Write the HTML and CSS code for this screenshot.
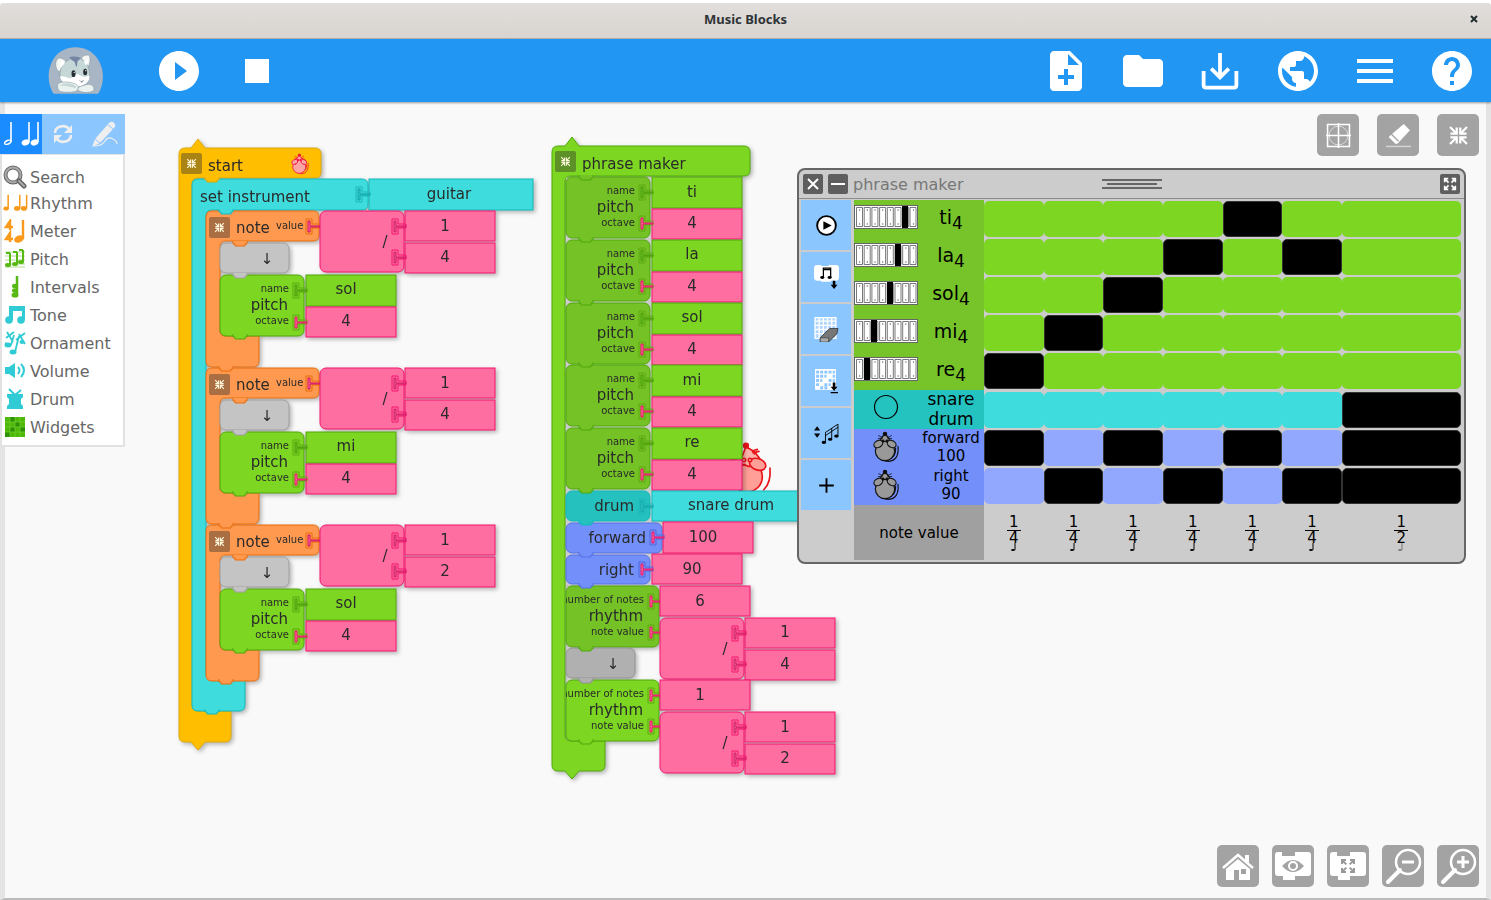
FILE: index.html
```
<!DOCTYPE html>
<html lang="en">
<head>
<meta charset="utf-8">
<title>Music Blocks</title>
<link rel="stylesheet" href="styles.css">
</head>
<body>
<svg class="defs" aria-hidden="true">
  <defs>
    <symbol id="i-collapse" viewBox="0 0 24 24"><path fill="none" stroke="currentColor" stroke-width="2.500" d="M2.500 2.500l7 7M10 3v7H3M21.500 2.500l-7 7M14 3v7h7M2.500 21.500l7-7M10 21v-7H3M21.500 21.500l-7-7M14 21v-7h7"/></symbol>
    <symbol id="i-expand" viewBox="0 0 24 24"><path fill="none" stroke="currentColor" stroke-width="3" d="M3.500 3.500l6 6M3 9V3h6M20.500 3.500l-6 6M21 9V3h-6M3.500 20.500l6-6M3 15v6h6M20.500 20.500l-6-6M21 15v6h-6"/></symbol>
    <symbol id="i-piano" viewBox="0 0 64 24">
      <rect x=".5" y=".5" width="63" height="23" fill="#fff" stroke="#666"/>
      <path fill="none" stroke="#555" stroke-width=".8" d="M2.500 2.500h6v19h-6zM10.200 2.500h6v19h-6zM17.900 2.500h6v19h-6zM25.600 2.500h6v19h-6zM33.300 2.500h6v19h-6zM41 2.500h6v19h-6zM48.700 2.500h6v19h-6zM56 2.500h6v19h-6z"/>
      <path stroke="#444" stroke-width="1.200" stroke-dasharray="1.200 6.500" d="M5 5H62M5 19H62"/>
    </symbol>
    <symbol id="i-mouse" viewBox="236 148 88 96">
      <g stroke="currentColor" stroke-width="3.500" stroke-linecap="round">
        <path fill="none" d="M316 194q4 42-28 45q-12 0-18-6M309 200q0 30-24 33"/>
        <path d="M277 158q14 10 20 34h-40q6-24 20-34z"/>
        <circle cx="277" cy="208" r="29"/>
        <ellipse cx="257" cy="187" rx="10" ry="14" transform="rotate(62 257 187)"/>
        <ellipse cx="297" cy="187" rx="10" ry="14" transform="rotate(-62 297 187)"/>
        <path fill="none" stroke-width="2.500" d="M258 162l11 6M257 171h11M296 162l-11 6M297 171h-11"/>
        <circle cx="277" cy="157" r="5" fill="currentColor"/><circle cx="271" cy="178" r="2.500" fill="currentColor"/><circle cx="283" cy="178" r="2.500" fill="currentColor"/>
      </g>
    </symbol>
    <symbol id="i-notes" viewBox="0 0 38 26">
      <g stroke="currentColor" stroke-width="1.600"><path d="M9 1v20M27 1v20M36 1v20"/></g>
      <g fill="currentColor"><path fill-rule="evenodd" d="M2 23c-1-4 6-6 7.500-3.500c1 4-6 6-7.500 3.500zm1.300-.5c1 1 5-1 5-2.500c-1-1-5 1-5 2.500z"/><ellipse cx="23.500" cy="21.500" rx="4" ry="2.900" transform="rotate(-20 23.500 21.500)"/><ellipse cx="32.500" cy="21.500" rx="4" ry="2.900" transform="rotate(-20 32.500 21.500)"/></g>
    </symbol>
    <g id="plug"><path class="socket" d="M0-7h6v5h8v4H6v6H0z"/><path class="core" d="M2-5h2v5h10v1H4v5H2z"/></g>
    <path id="tab" d="M0-2V1h2v2h10V1h2v-3"/>
    <g id="fold"><rect width="21" height="21" rx="2" fill="#333" fill-opacity=".42"/><use href="#i-collapse" x="5" y="5" width="11" height="11" color="#fff8dc"/></g>
    <g id="pitch">
      <rect width="84" height="61" rx="6"/>
      <g class="label"><text class="small end" x="69" y="17">name</text><text class="end" x="68" y="35">pitch</text><text class="small end" x="69" y="49">octave</text></g>
    </g>
    <g id="divide">
      <rect width="84" height="61" rx="6"/><rect x="85" width="90" height="30"/><rect x="85" y="32" width="90" height="30"/>
      <use href="#plug" x="72" y="15"/><use href="#plug" x="72" y="46"/>
      <text class="label mid" x="65" y="36">/</text>
    </g>
    <g id="note-arm"><path d="M6 0h101q6 0 6 6v18q0 6-6 6H20q-6 0-6 6v84q0 5 5 5h34v25q0 6-6 6H6q-6 0-6-6V6q0-6 6-6z"/></g>
    <g id="pause"><rect width="69" height="30" rx="6"/><text class="label mid" x="47" y="21">↓</text></g>
    <g id="note">
      <use href="#note-arm" class="orange" x="0" y="0"/>
      <use href="#fold" x="3" y="6"/>
      <g class="label"><text x="30" y="22">note</text><text class="small" x="70" y="18">value</text></g>
      <use href="#plug" class="p-orange" x="100" y="15"/>
      <use href="#divide" class="pink" x="114" y="0"/>
      <use href="#pause" class="gray" x="14" y="32"/><use href="#tab" class="orange" x="27" y="32"/>
      <use href="#pitch" class="green" x="14" y="64"/><use href="#tab" class="gray" x="27" y="64"/>
      <use href="#tab" class="green" x="27" y="125"/>
      <rect class="green" x="100" y="64" width="90" height="31"/><rect class="pink" x="100" y="96" width="90" height="30"/>
      <use href="#plug" class="p-green" x="87" y="79"/><use href="#plug" class="p-pink" x="87" y="111"/>
      <text class="label mid" x="140" y="115">4</text>
    </g>
    <g id="pitch-row">
      <use href="#pitch" class="green dim" x="0" y="0"/>
      <rect class="green" x="86" width="90" height="31"/><rect class="pink" x="86" y="32" width="90" height="30"/>
      <use href="#plug" class="p-green" x="73" y="15"/><use href="#plug" class="p-pink" x="73" y="46"/>
      <text class="label mid" x="126" y="51">4</text>
    </g>
    <clipPath id="rhythm-clip"><rect width="94" height="61"/></clipPath>
    <g id="rhythm">
      <rect width="93" height="61" rx="6"/>
      <g class="label" clip-path="url(#rhythm-clip)"><text class="small end" x="78" y="17">number of notes</text><text class="end" x="77" y="35">rhythm</text><text class="small end" x="78" y="49">note value</text></g>
      <g class="p-pink"><use href="#plug" x="82" y="15"/><use href="#plug" x="82" y="46"/></g>
      <g class="pink"><rect x="94" width="90" height="30"/><use href="#divide" x="94" y="32"/></g>
    </g>
    <g id="frac-note"><path stroke="currentColor" d="M5 0v7"/><ellipse cx="3" cy="7" rx="2" ry="1" fill="currentColor"/></g>
  </defs>
</svg>

<header class="titlebar"><span class="titlebar-name">Music Blocks</span><button class="titlebar-close" aria-label="Close window"><svg viewBox="0 0 8 8"><path d="M1 1l6 6M7 1L1 7" stroke="#222b2e" stroke-width="2"/></svg></button></header>

<nav class="toolbar">
  <div class="toolbar-left">
    <button class="logo" aria-label="About"><svg viewBox="140 130 176 150">
      <path fill="#a7b5c4" d="M162 273C130 225 150 135 228 134C306 135 328 225 296 273z"/>
      <g stroke="#7d8e93" stroke-width="1.500">
        <path fill="#f3f6f3" d="M179 207c-16-10-12-42 2-41c10 1 18 8 20 15z"/>
        <path fill="#f3f6f3" d="M246 166c5-10 24-12 25-3c2 18-1 26-12 35z"/>
        <path fill="#c6d7d7" d="M182 222c-4-34 20-54 46-57c24 0 40 20 43 50c0 22-20 35-42 35c-24 0-44-8-47-28z"/>
      </g>
      <path fill="#fff" d="M181 222c14-4 20 4 30 5c10 0 14-12 21-12c8 0 14 8 24 7l14-3c2 18-16 33-42 33c-20 0-42-10-47-30z"/>
      <path fill="#7485a4" d="M209 163q16-4 34 2q-4 10-9 11l-2 18q-5-8-7-17q-8-2-16-14z"/>
      <path fill="#fff" d="M181 185l9-13l6 10l-12 13zM253 178l12-8v12l-6 6z"/>
      <ellipse cx="222" cy="213" rx="6" ry="10" fill="#262d35"/><ellipse cx="257" cy="208" rx="6" ry="10" fill="#262d35"/><circle cx="224" cy="209" r="2" fill="#fff"/><circle cx="259" cy="204" r="2" fill="#fff"/>
      <path fill="none" stroke="#66777b" stroke-width="2" d="M240 233q4 6 7 3q3 3 5-4M247 236v5"/>
      <g fill="#eaf2f0" stroke="#7d8e93" stroke-width="1.500"><path d="M174 247c2-12 34-10 46-6c16 4 20 14 13 23c-12 7-48 6-55 0q-5-8-4-17z"/><path d="M235 262c-1-12 15-12 25-16c16-4 25 6 23 15c-2 10-38 12-48 1z"/></g>
      <path fill="#c6d7d7" d="M178 248q24-10 42-3q10 4 10 12q-24-8-52-9z"/>
    </svg></button>
    <button aria-label="Play"><svg viewBox="0 0 24 24"><path d="M12 2C6.480 2 2 6.480 2 12s4.480 10 10 10 10-4.480 10-10S17.520 2 12 2zm-2 14.500v-9l6 4.500-6 4.500z"/></svg></button>
    <button aria-label="Stop"><svg viewBox="0 0 24 24"><path d="M6 6h12v12H6z"/></svg></button>
  </div>
  <div class="toolbar-right">
    <button aria-label="New project"><svg viewBox="0 0 24 24"><path d="M14 2H6c-1.100 0-1.990.9-1.990 2L4 20c0 1.100.89 2 1.990 2H18c1.100 0 2-.9 2-2V8l-6-6zm2 14h-3v3h-2v-3H8v-2h3v-3h2v3h3v2zm-3-7V3.500L18.500 9H13z"/></svg></button>
    <button aria-label="Load project"><svg viewBox="0 0 24 24"><path d="M10 4H4c-1.100 0-1.990.9-1.990 2L2 18c0 1.100.9 2 2 2h16c1.100 0 2-.9 2-2V8c0-1.100-.9-2-2-2h-8l-2-2z"/></svg></button>
    <button aria-label="Save project"><svg viewBox="0 0 24 24"><path fill="none" stroke="#fff" stroke-width="1.900" d="M3.800 12v7q0 1.300 1.300 1.300h13.800q1.300 0 1.300-1.300v-7M12 3v12M7.600 10.800l4.400 4.400 4.400-4.400"/></svg></button>
    <button aria-label="Planet"><svg viewBox="0 0 24 24"><path d="M12 2C6.480 2 2 6.480 2 12s4.480 10 10 10 10-4.480 10-10S17.520 2 12 2zm-1 17.930c-3.950-.49-7-3.850-7-7.930 0-.62.08-1.210.21-1.790L9 15v1c0 1.100.9 2 2 2v1.930zm6.900-2.540c-.26-.81-1-1.390-1.900-1.390h-1v-3c0-.55-.45-1-1-1H8v-2h2c.55 0 1-.45 1-1V7h2c1.100 0 2-.9 2-2v-.41c2.930 1.190 5 4.060 5 7.410 0 2.080-.8 3.970-2.100 5.390z"/></svg></button>
    <button aria-label="Menu"><svg viewBox="0 0 24 24"><path d="M3 18h18v-2H3v2zm0-5h18v-2H3v2zm0-7v2h18V6H3z"/></svg></button>
    <button aria-label="Help"><svg viewBox="0 0 24 24"><path d="M12 2C6.480 2 2 6.480 2 12s4.480 10 10 10 10-4.480 10-10S17.520 2 12 2zm1 17h-2v-2h2v2zm2.070-7.750l-.9.920C13.450 12.900 13 13.500 13 15h-2v-.5c0-1.100.45-2.100 1.170-2.830l1.240-1.260c.37-.36.590-.86.590-1.410 0-1.100-.9-2-2-2s-2 .9-2 2H8c0-2.210 1.790-4 4-4s4 1.790 4 4c0 .88-.36 1.680-.93 2.250z"/></svg></button>
  </div>
</nav>

<main class="workspace">
  <svg class="blocks" width="850" height="700" viewBox="0 102 850 700">
    <!-- turtle on the stage, partly behind the blocks -->
    <g transform="translate(545 350) scale(.3333)" stroke="#e8141c" stroke-width="5" stroke-linecap="round">
      <path fill="none" d="M675 354q4 44-19 66"/>
      <circle cx="606" cy="380" r="46" fill="#ff9f97"/>
      <path fill="#ffb3ab" d="M603 290q40 20 44 46l-34 14-30-10z"/>
      <ellipse cx="638" cy="343" rx="25" ry="17" fill="#ff9f97" transform="rotate(20 638 343)"/>
      <path fill="none" d="M622 303l15-5M624 308l18-4M628 312l8-8M555 327h20M592 346l8-3"/>
      <circle cx="603" cy="287" r="7" fill="#e8141c"/><circle cx="597" cy="330" r="5" fill="#fff"/><circle cx="615" cy="330" r="5" fill="#fff"/>
    </g>

    <g class="stack">
      <path class="yellow" d="M185 148h6l7-9 7 9h110q6 0 6 6v18q0 6-6 6H198q-6 0-6 6v521q0 6 6 6h33v25q0 6-6 6h-20l-7 8-7-8h-6q-6 0-6-6V154q0-6 6-6z"/>
      <use href="#fold" x="181" y="153"/><text class="label" x="208" y="171">start</text>
      <use href="#i-mouse" class="pink-mouse" x="290" y="153" width="20" height="22"/>
      <path class="cyan" d="M198 179h164q6 0 6 6v19q0 6-6 6H212q-6 0-6 6v458q0 6 6 6h33v25q0 6-6 6h-41q-6 0-6-6V185q0-6 6-6z"/>
      <use href="#tab" class="yellow" x="205" y="179"/>
      <text class="label" x="200" y="202">set instrument</text>
      <rect class="cyan" x="369" y="179" width="164" height="31"/><use href="#plug" class="p-cyan" x="356" y="194"/>
      <text class="label mid" x="449" y="199">guitar</text>

      <use href="#note" x="206" y="211"/><use href="#tab" class="cyan" x="219" y="211"/>
      <use href="#note" x="206" y="368"/><use href="#tab" class="orange" x="219" y="368"/>
      <use href="#note" x="206" y="525"/><use href="#tab" class="orange" x="219" y="525"/>
      <use href="#tab" class="orange" x="219" y="681"/><use href="#tab" class="cyan" x="205" y="711"/>
      <g class="label mid">
        <text x="445" y="231">1</text><text x="445" y="262">4</text><text x="346" y="294">sol</text>
        <text x="445" y="388">1</text><text x="445" y="419">4</text><text x="346" y="451">mi</text>
        <text x="445" y="545">1</text><text x="445" y="576">2</text><text x="346" y="608">sol</text>
      </g>
    </g>

    <g class="stack">
      <path class="green" d="M558 146h7l7-9 7 9h165q6 0 6 6v18q0 6-6 6H571q-6 0-6 6v553q0 6 6 6h34v24q0 6-6 6h-20l-7 8-7-8h-7q-6 0-6-6V152q0-6 6-6z"/>
      <use href="#fold" x="555" y="151"/><text class="label" x="582" y="169">phrase maker</text>
      <path fill="#ccc" d="M566 178h86v407h-86z"/>
      <use href="#pitch-row" x="566" y="177"/><use href="#pitch-row" x="566" y="240"/><use href="#pitch-row" x="566" y="303"/><use href="#pitch-row" x="566" y="365"/><use href="#pitch-row" x="566" y="428"/>
      <g class="green dim"><use href="#tab" x="579" y="177"/><use href="#tab" x="579" y="239"/><use href="#tab" x="579" y="302"/><use href="#tab" x="579" y="364"/><use href="#tab" x="579" y="427"/></g>
      <rect class="cyan dim" x="566" y="491" width="84" height="30" rx="6"/><rect class="cyan" x="652" y="491" width="163" height="30"/><use href="#plug" class="p-cyan" x="639" y="506"/>
      <rect class="blue" x="566" y="523" width="96" height="30" rx="6"/><rect class="pink" x="663" y="522" width="90" height="31"/><use href="#plug" class="p-blue" x="650" y="537"/>
      <rect class="blue" x="566" y="555" width="84" height="29" rx="6"/><rect class="pink" x="652" y="554" width="90" height="30"/><use href="#plug" class="p-blue" x="639" y="569"/>
      <use href="#rhythm" class="green dim" x="566" y="586"/>
      <use href="#pause" class="gray dim" x="566" y="648"/>
      <use href="#rhythm" class="green" x="566" y="680"/>
      <use href="#tab" class="green dim" x="579" y="490"/><use href="#tab" class="cyan dim" x="579" y="522"/><use href="#tab" class="blue" x="579" y="554"/><use href="#tab" class="blue" x="579" y="585"/><use href="#tab" class="green dim" x="579" y="648"/><use href="#tab" class="gray dim" x="579" y="680"/><use href="#tab" class="green" x="579" y="741"/>
      <g class="label end"><text x="634" y="511">drum</text><text x="646" y="543">forward</text><text x="634" y="575">right</text></g>
      <g class="label mid">
        <text x="692" y="197">ti</text><text x="692" y="259">la</text><text x="692" y="322">sol</text><text x="692" y="385">mi</text><text x="692" y="447">re</text>
        <text x="731" y="510">snare drum</text><text x="703" y="542">100</text><text x="692" y="574">90</text>
        <text x="700" y="606">6</text><text x="785" y="637">1</text><text x="785" y="669">4</text>
        <text x="700" y="700">1</text><text x="785" y="732">1</text><text x="785" y="763">2</text>
      </g>
    </g>
  </svg>

  <aside class="palette">
    <div class="palette-tabs">
      <button class="current" aria-label="Music"><svg width="38" height="26"><use href="#i-notes"/></svg></button>
      <button aria-label="Logic"><svg width="20" height="20" viewBox="0 0 20 20"><g fill="none" stroke="#eee" stroke-width="2.600"><path d="M2 9c0-7 10-9 14-4M18 11c0 7-10 9-14 4"/></g><path fill="#eee" d="M19 1v8h-8zM1 19v-8h8z"/></svg></button>
      <button aria-label="Artwork"><svg width="27" height="27" viewBox="0 0 27 27"><path fill="#eee" d="M1 26l3-8L18 2q2-2 4-1l2 2q1 2-1 4L9 22z"/><path fill="none" stroke="#8cc6ff" d="M4 18l5 4M17 4l5 4"/><path fill="none" stroke="#eee" stroke-width="1.200" d="M3 25q8 0 11-5t8-2q4 2 4 5"/></svg></button>
    </div>
    <div class="palette-list">
      <button class="search"><svg viewBox="0 0 24 24"><circle cx="10" cy="10" r="7.500" fill="none" stroke="#666" stroke-width="4"/><circle cx="10" cy="10" r="7.500" fill="none" stroke="#aaa" stroke-width="2"/><path stroke="#666" stroke-width="5" stroke-linecap="round" d="M16 16l5 5"/><path stroke="#aaa" stroke-width="2" stroke-linecap="round" d="M16 16l5 5"/></svg>Search</button>
      <button><svg viewBox="0 0 38 26" class="orange-ink"><g stroke="currentColor" stroke-width="2.200"><path d="M9 1v20M26 1v20M36 1v20"/></g><g fill="currentColor"><ellipse cx="6" cy="21" rx="4" ry="3"/><ellipse cx="22" cy="21" rx="4.500" ry="3.500"/><ellipse cx="32" cy="21" rx="4.500" ry="3.500"/></g></svg>Rhythm</button>
      <button><svg viewBox="0 0 24 24" class="orange-ink"><path fill="none" stroke="currentColor" stroke-width="2.400" d="M7 11V2L3 8h7M7 23v-9l-4 6h7M20 1v19"/><ellipse cx="16" cy="20" rx="5" ry="3.500" fill="currentColor" transform="rotate(-20 16 20)"/></svg>Meter</button>
      <button><svg viewBox="0 0 24 24" class="green-ink"><path stroke="currentColor" stroke-width=".8" opacity=".6" d="M2 5h20M2 9h20M2 13h20M2 17h20M2 20h20"/><path fill="none" stroke="currentColor" stroke-width="2" d="M7 18V6M14 17V5M20 15V3M7 6H3M14 5h-4M20 3h-4"/><g fill="currentColor"><ellipse cx="5" cy="18" rx="3" ry="2"/><ellipse cx="12" cy="17" rx="3" ry="2"/><ellipse cx="18" cy="15" rx="3" ry="2"/></g></svg>Pitch</button>
      <button><svg viewBox="0 0 24 24" class="green-ink"><path stroke="currentColor" stroke-width="2.500" d="M14 1v18"/><g fill="currentColor"><ellipse cx="12" cy="11" rx="3" ry="2.300"/><ellipse cx="12" cy="15.500" rx="3" ry="2.300"/><ellipse cx="12" cy="20" rx="3.500" ry="2.600"/></g></svg>Intervals</button>
      <button><svg viewBox="0 0 24 24" class="cyan-ink"><path fill="currentColor" d="M6 3h16v14h-3V8H10v9H6z"/><circle cx="6" cy="17" r="3.800" fill="currentColor"/><circle cx="18" cy="17" r="3.800" fill="currentColor"/></svg>Tone</button>
      <button><svg viewBox="0 0 24 24" class="cyan-ink"><path fill="none" stroke="currentColor" stroke-width="1.800" d="M4 1l6 10M3 7l8-6M2 12l5 2M12 21l4-16M13 9l9-7M16 3l6 10M8 14l3-10"/><g fill="currentColor"><ellipse cx="5" cy="14" rx="3.500" ry="2.500"/><ellipse cx="10" cy="21" rx="3.500" ry="2.500"/><ellipse cx="19" cy="11" rx="2.500" ry="2"/></g></svg>Ornament</button>
      <button><svg viewBox="0 0 24 24" class="cyan-ink"><path fill="currentColor" d="M2 8h4l6-4v15l-6-4H2z"/><path fill="none" stroke="currentColor" stroke-width="2" d="M15 8q3 3 0 7M18 5q6 6 0 13"/></svg>Volume</button>
      <button><svg viewBox="0 0 24 24" class="cyan-ink"><path fill="currentColor" d="M4 7h16v3l-2 2v5l2 2v3H4v-3l2-2v-5l-2-2z"/><path stroke="currentColor" stroke-width="2" d="M12 8L6 2M12 8l6-5"/></svg>Drum</button>
      <button><svg viewBox="0 0 24 24"><path fill="#4eb808" d="M2 2h20v20H2z"/><path fill="#2f9206" d="M7 2h5v5H7zM12 7h5v5h-5zM7 12h5v5H7zM17 12h5v5h-5zM2 17h5v5H2z"/><path stroke="#74d030" stroke-width=".7" d="M7 2v20M12 2v20M17 2v20M2 7h20M2 12h20M2 17h20"/></svg>Widgets</button>
    </div>
  </aside>

  <div class="corner corner-top">
    <button aria-label="Grid"><svg viewBox="0 0 24 24"><g fill="none" stroke="#fff"><path stroke-width="1.500" d="M1.500 1.500h21v21h-21zM12 0v24M0 12h24"/><circle cx="12" cy="12" r="9" stroke-width=".8" opacity=".7"/></g></svg></button>
    <button aria-label="Clear"><svg viewBox="0 0 24 24"><path fill="#fff" d="M17 1l6 6-12 13H9l-6-6v-1z"/><path stroke="#a3a3a3" stroke-width="1.200" d="M5 10.500l7 7"/><path stroke="#d2d2d2" stroke-width="1.500" d="M0 22.500h24"/></svg></button>
    <button aria-label="Collapse blocks"><svg viewBox="-2 -2 28 28"><use href="#i-collapse" width="24" height="24"/></svg></button>
  </div>
  <div class="corner corner-bottom">
    <button aria-label="Home"><svg class="wide" viewBox="0 0 38 38"><path fill="none" stroke="#fff" stroke-width="2.500" d="M4 21L19 8l15 13"/><path fill="#fff" d="M26 8h4v9l-4-4zM7 22l12-10 12 10v11H20V23h-5v10H7z"/><path fill="#a3a3a3" d="M22 22h5v5h-5z"/></svg></button>
    <button aria-label="Show blocks"><svg class="wide" viewBox="0 0 38 38"><path fill="#fff" d="M4 5h4v4h13V5h13q3 0 3 3v18q0 3-3 3H21v4H9v-4H4q-3 0-3-3V8q0-3 3-3z"/><path fill="#a3a3a3" d="M8 19q11-12 22 0q-11 12-22 0z"/><circle cx="19" cy="19" r="4" fill="#a3a3a3" stroke="#fff" stroke-width="2"/></svg></button>
    <button aria-label="Expand blocks"><svg class="wide" viewBox="0 0 38 38"><path fill="#fff" d="M4 5h4v4h13V5h13q3 0 3 3v18q0 3-3 3H21v4H9v-4H4q-3 0-3-3V8q0-3 3-3z"/><use href="#i-expand" x="11" y="11" width="16" height="16" color="#999"/></svg></button>
    <button aria-label="Zoom out"><svg class="wide" viewBox="0 0 38 38"><path stroke="#fff" stroke-width="4" stroke-linecap="round" d="M4 35l12-12"/><circle cx="24" cy="15" r="12" fill="none" stroke="#fff" stroke-width="2.500"/><path stroke="#fff" stroke-width="3" d="M18 15h12"/></svg></button>
    <button aria-label="Zoom in"><svg class="wide" viewBox="0 0 38 38"><path stroke="#fff" stroke-width="4" stroke-linecap="round" d="M4 35l12-12"/><circle cx="24" cy="15" r="12" fill="none" stroke="#fff" stroke-width="2.500"/><path stroke="#fff" stroke-width="3" d="M18 15h12M24 9v12"/></svg></button>
  </div>

  <section class="widget">
    <header class="widget-head">
      <div class="widget-name"><button aria-label="Close"><svg viewBox="0 0 20 20"><path stroke="#fff" stroke-width="2" d="M5 5l10 10M15 5L5 15"/></svg></button><button aria-label="Minimize"><svg viewBox="0 0 20 20"><path stroke="#fff" stroke-width="2" d="M3 10h14"/></svg></button><span>phrase maker</span></div>
      <svg class="grip" width="60" height="10"><path stroke="#666" stroke-width="2" d="M0 1h60M5 5h50M0 9h60"/></svg>
      <button class="widget-max" aria-label="Maximize"><svg viewBox="-5 -5 34 34"><use href="#i-expand" width="24" height="24"/></svg></button>
    </header>
    <div class="widget-body">
      <div class="widget-tools">
        <button aria-label="Play phrase"><svg viewBox="0 0 24 24"><circle cx="12" cy="12" r="9" fill="#fff" stroke="#000" stroke-width="1.800"/><path d="M9 8v8l8-4z"/></svg></button>
        <button aria-label="Save as action"><svg viewBox="0 0 24 24"><path fill="#fff" d="M3 0h4v1h7V0h7q3 0 3 3v9q0 3-3 3h-5v1H7v-1H3q-3 0-3-3V3q0-3 3-3z"/><path fill="none" stroke="#000" stroke-width="1.200" d="M9 12V3h7v9M9 4.500h7"/><ellipse cx="8" cy="12" rx="2" ry="1.400"/><ellipse cx="15" cy="12" rx="2" ry="1.400"/><path d="M18 15h2.500v4h2l-3.200 4-3.300-4h2z"/></svg></button>
        <button aria-label="Erase"><svg viewBox="0 0 24 24"><path fill="#aed6ff" d="M1 0h20v20H1z"/><path fill="none" stroke="#fff" stroke-width="1.300" d="M1 .5h20v20H1zM5 0v20M9 0v20M13 0v20M17 0v20M1 4h20M1 8h20M1 12h20M1 16h20"/><path fill="#777" stroke="#333" stroke-width=".8" d="M6 20l9-9h8l-1 5-8 8H6z"/><path fill="#aaa" stroke="#333" stroke-width=".6" d="M6 20h8v4H6z"/></svg></button>
        <button aria-label="Export"><svg viewBox="0 0 24 24"><path fill="#fff" d="M1 0h20v20H1z"/><path stroke="#8cc6ff" stroke-width="2.800" stroke-dasharray="2.800 1.200" d="M2 3h18M2 7h10M18 7h2M2 11h6M14 11h6M2 15h3M10 15h6M6 18h8"/><path d="M18 13h2.500v4h2l-3.200 4-3.300-4h2zM16 22h7v1.200h-7z"/></svg></button>
        <button aria-label="Sort notes"><svg viewBox="0 0 24 24"><path d="M3 5l3 4H0zM3 16l-3-4h6z"/><path fill="none" stroke="#000" stroke-width=".9" d="M11 20V11L23 3v11M11 14l12-8M17 17V7"/><g><ellipse cx="9.500" cy="20.500" rx="2.200" ry="1.500"/><ellipse cx="15.500" cy="17.500" rx="2.200" ry="1.500"/><ellipse cx="21.500" cy="14.500" rx="2.200" ry="1.500"/></g></svg></button>
        <button aria-label="Add row"><svg viewBox="0 0 24 24"><path stroke="#000" stroke-width="1.800" d="M12 5v14M5 12h14"/></svg></button>
      </div>
      <table class="matrix">
        <colgroup><col class="name-col"><col span="8"></colgroup>
        <tbody>
          <tr class="g"><th scope="row"><div><svg class="keys" viewBox="0 0 64 24"><use href="#i-piano"/><path d="M48 1h6v22h-6z"/></svg><span>ti<sub>4</sub></span></div></th><td><button></button></td><td><button></button></td><td><button></button></td><td><button></button></td><td><button class="on"></button></td><td><button></button></td><td colspan="2"><button></button></td></tr>
          <tr class="g"><th scope="row"><div><svg class="keys" viewBox="0 0 64 24"><use href="#i-piano"/><path d="M41 1h6v22h-6z"/></svg><span>la<sub>4</sub></span></div></th><td><button></button></td><td><button></button></td><td><button></button></td><td><button class="on"></button></td><td><button></button></td><td><button class="on"></button></td><td colspan="2"><button></button></td></tr>
          <tr class="g"><th scope="row"><div><svg class="keys" viewBox="0 0 64 24"><use href="#i-piano"/><path d="M33 1h6v22h-6z"/></svg><span>sol<sub>4</sub></span></div></th><td><button></button></td><td><button></button></td><td><button class="on"></button></td><td><button></button></td><td><button></button></td><td><button></button></td><td colspan="2"><button></button></td></tr>
          <tr class="g"><th scope="row"><div><svg class="keys" viewBox="0 0 64 24"><use href="#i-piano"/><path d="M17 1h6v22h-6z"/></svg><span>mi<sub>4</sub></span></div></th><td><button></button></td><td><button class="on"></button></td><td><button></button></td><td><button></button></td><td><button></button></td><td><button></button></td><td colspan="2"><button></button></td></tr>
          <tr class="g"><th scope="row"><div><svg class="keys" viewBox="0 0 64 24"><use href="#i-piano"/><path d="M10 1h6v22h-6z"/></svg><span>re<sub>4</sub></span></div></th><td><button class="on"></button></td><td><button></button></td><td><button></button></td><td><button></button></td><td><button></button></td><td><button></button></td><td colspan="2"><button></button></td></tr>
          <tr class="c"><th scope="row"><div><svg class="mark" viewBox="0 0 32 32"><circle cx="16" cy="14" r="11.500" fill="none" stroke="#000" stroke-width="1.200"/></svg><span>snare<br>drum</span></div></th><td><button></button></td><td><button></button></td><td><button></button></td><td><button></button></td><td><button></button></td><td><button></button></td><td colspan="2"><button class="on"></button></td></tr>
          <tr class="b"><th scope="row"><div><svg class="mark"><use href="#i-mouse"/></svg><span>forward<br>100</span></div></th><td><button class="on"></button></td><td><button></button></td><td><button class="on"></button></td><td><button></button></td><td><button class="on"></button></td><td><button></button></td><td colspan="2"><button class="on"></button></td></tr>
          <tr class="b"><th scope="row"><div><svg class="mark"><use href="#i-mouse"/></svg><span>right<br>90</span></div></th><td><button></button></td><td><button class="on"></button></td><td><button></button></td><td><button class="on"></button></td><td><button></button></td><td><button class="on"></button></td><td colspan="2"><button class="on"></button></td></tr>
        </tbody>
        <tfoot>
          <tr><th scope="row">note value</th>
            <td><div class="frac"><span>1</span><span>4</span><svg viewBox="0 0 8 8"><use href="#frac-note"/></svg></div></td>
            <td><div class="frac"><span>1</span><span>4</span><svg viewBox="0 0 8 8"><use href="#frac-note"/></svg></div></td>
            <td><div class="frac"><span>1</span><span>4</span><svg viewBox="0 0 8 8"><use href="#frac-note"/></svg></div></td>
            <td><div class="frac"><span>1</span><span>4</span><svg viewBox="0 0 8 8"><use href="#frac-note"/></svg></div></td>
            <td><div class="frac"><span>1</span><span>4</span><svg viewBox="0 0 8 8"><use href="#frac-note"/></svg></div></td>
            <td><div class="frac"><span>1</span><span>4</span><svg viewBox="0 0 8 8"><use href="#frac-note"/></svg></div></td>
            <td colspan="2"><div class="frac half"><span>1</span><span>2</span><svg viewBox="0 0 8 8"><use href="#frac-note"/></svg></div></td></tr>
        </tfoot>
      </table>
    </div>
  </section>
</main>
</body>
</html>
```
FILE: styles.css
```
* { box-sizing: border-box; }
body {
  margin: 0;
  min-height: 100vh;
  display: flex;
  flex-direction: column;
  background: #fff;
  font-family: "DejaVu Sans", sans-serif;
  font-size: 15px;
  color: #222;
}
button {
  display: flex;
  align-items: center;
  justify-content: center;
  margin: 0;
  padding: 0;
  border: 0;
  background: none;
  color: inherit;
  font: inherit;
}
svg { display: block; flex: none; }
.defs { position: absolute; width: 0; height: 0; }

.titlebar {
  display: grid;
  grid-template-columns: 1fr auto 1fr;
  align-items: center;
  height: 36px;
  margin-top: 3px;
  padding: 0 13px 3px;
  background: linear-gradient(#e1dedb, #d8d4d0);
  border-bottom: 1px solid #b5b0aa;
  border-radius: 3px 3px 0 0;
}
.titlebar-name { grid-column: 2; font: bold 13px "Noto Sans", sans-serif; color: #2e3436; }
.titlebar-close { justify-self: end; }
.titlebar-close svg { width: 8px; height: 8px; }

.toolbar {
  position: relative;
  z-index: 1;
  display: flex;
  justify-content: space-between;
  height: 63px;
  padding-left: 46px;
  background: #2196f3;
  box-shadow: 0 1px 2px rgba(0, 0, 0, .4);
}
.toolbar svg { width: 48px; height: 48px; fill: #fff; }
.toolbar .logo svg { width: 59px; height: 50px; }
.toolbar-left { display: flex; }
.toolbar-left button { width: 78px; }
.toolbar-left .logo { width: 94px; justify-content: flex-start; }
.toolbar-right { display: flex; width: 464px; }
.toolbar-right button { flex: 1; }

.workspace {
  position: relative;
  flex: 1;
  background: #f9f9f9;
  border: solid #e4e4e4;
  border-width: 0 5px;
  border-bottom: 2px solid #bbb;
}
.blocks { position: absolute; top: 0; left: -5px; }
.label { fill: #2a2a2a; stroke: none; font-size: 15px; }
.small { font-size: 10px; }
.end { text-anchor: end; }
.mid { text-anchor: middle; }
.stack { filter: drop-shadow(2px 2px 2px rgba(0, 0, 0, .28)); }
.yellow { fill: #ffbf00; stroke: #dba70c; }
.cyan { fill: #3edcdd; stroke: #10b9bd; }
.cyan.dim { fill: #25c1bf; }
.orange { fill: #ff994f; stroke: #e86d0c; }
.green { fill: #7cd622; stroke: #4fa80a; }
.green.dim { fill: #75c226; }
.pink { fill: #ff6ea1; stroke: #f5146f; }
.gray { fill: #c4c4c4; stroke: #a0a0a0; }
.gray.dim { fill: #b0b0b0; stroke: #939393; }
.blue { fill: #728ffa; stroke: #5570e6; }
.p-green { --s: #5caa12; --c: #6cc01e; --e: #4b9b0b; }
.p-pink { --s: #5fa812; --c: #ff6ea1; --e: #ea1168; }
.p-orange { --s: #e86d0c; --c: #ff6ea1; --e: #d1105f; }
.p-cyan { --s: #1cb8bc; --c: #2fcaca; --e: #12a3a8; }
.p-blue { --s: #5068d8; --c: #ff6ea1; --e: #ea1168; }
.pink { --s: #f5146f; --c: #e0588c; --e: #d81a66; }
.socket { fill: none; stroke: var(--s); stroke-width: 1px; }
.core { fill: var(--c); stroke: var(--e); stroke-width: 1px; }
.pink-mouse { color: #f0103c; fill: #ffa5a5; }

.palette { position: absolute; top: 12px; left: -5px; width: 125px; }
.palette-tabs { display: flex; height: 40px; background: #8cc6ff; }
.palette-tabs button { flex: 1; color: #fff; }
.palette-tabs .current { background: #1a8cff; }
.palette-list {
  padding: 10px 0 4px;
  background: #fff;
  border: 2px solid #e2e2e2;
  border-top: 1px solid #e2e2e2;
}
.palette-list button {
  width: 100%;
  height: 28px;
  gap: 2px;
  justify-content: flex-start;
  font-size: 16px;
  color: #666;
}
.palette-list .search { height: 24px; }
.palette-list svg { width: 26px; height: 24px; }
.orange-ink { color: #f99a1c; }
.green-ink { color: #58b814; }
.cyan-ink { color: #30cbd4; }

.corner { position: absolute; right: 7px; display: flex; }
.corner-top { top: 12px; gap: 18px; }
.corner-bottom { bottom: 11px; gap: 13px; }
.corner button { width: 42px; height: 42px; border-radius: 5px; background: #a3a3a3; color: #fff; }
.corner svg { width: 25px; height: 25px; }
.corner .wide { width: 38px; height: 38px; }

.widget {
  position: absolute;
  top: 66px;
  left: 792px;
  width: 669px;
  background: #ccc;
  border: 2px solid #666;
  border-radius: 8px;
  color: #000;
}
.widget-head {
  display: grid;
  grid-template-columns: 1fr auto 1fr;
  align-items: center;
  height: 29px;
  padding: 0 4px;
  border-bottom: 1px solid #8c8c8c;
}
.widget-name { display: flex; align-items: center; gap: 5px; font-size: 16px; color: #777; }
.widget-head button { width: 20px; height: 20px; background: #5e5e5e; border-radius: 2px; color: #fff; }
.widget-head button svg { width: 20px; height: 20px; }
.widget-max { justify-self: end; }
.widget-body { display: flex; gap: 3px; padding: 1px 3px 2px 2px; }
.widget-tools { display: flex; flex-direction: column; gap: 2px; flex: none; width: 50px; }
.widget-tools button { height: 50px; background: #8cc6ff; }
.widget-tools svg { width: 25px; height: 25px; }
.matrix { flex: 1; table-layout: fixed; border-collapse: collapse; width: 100%; }
.name-col { width: 130px; }
.matrix th, .matrix td { height: 38px; padding: 0; font-weight: normal; }
.matrix th div { display: flex; align-items: center; height: 38px; }
.matrix th span { flex: 1; text-align: center; }
.keys { width: 64px; height: 24px; margin-bottom: 5px; }
.mark { width: 32px; height: 32px; margin: 0 16px; color: #111; fill: #999; }
.g th span { font-size: 19px; line-height: 34px; padding-bottom: 4px; white-space: nowrap; }
.g sub { font-size: 17px; line-height: 1; vertical-align: -5px; }
.c th div { height: 39px; padding-bottom: 2px; }
.c th span { font-size: 17px; line-height: 20px; }
.b th span { font-size: 15px; line-height: 18px; }
.b th div { padding-bottom: 2px; }
.matrix td button { width: 100%; height: 36px; border-radius: 5px; }
.g th { background: #77c42a; }
.g button { background: #7cd622; }
.c th { background: #25c3c0; }
.c button { background: #3edcdd; }
.b th { background: #728ffa; }
.b button { background: #92a8ff; }
.matrix .on { background: #000; border: 1px solid #333; }
.matrix tfoot th { height: 55px; background: #a0a0a0; }
.frac { display: flex; flex-direction: column; align-items: center; line-height: 15px; }
.frac span { width: 14px; text-align: center; }
.frac span + span { border-top: 1px solid #000; height: 13px; }
.frac svg { width: 8px; height: 8px; }
.half svg { color: #777; }
```
